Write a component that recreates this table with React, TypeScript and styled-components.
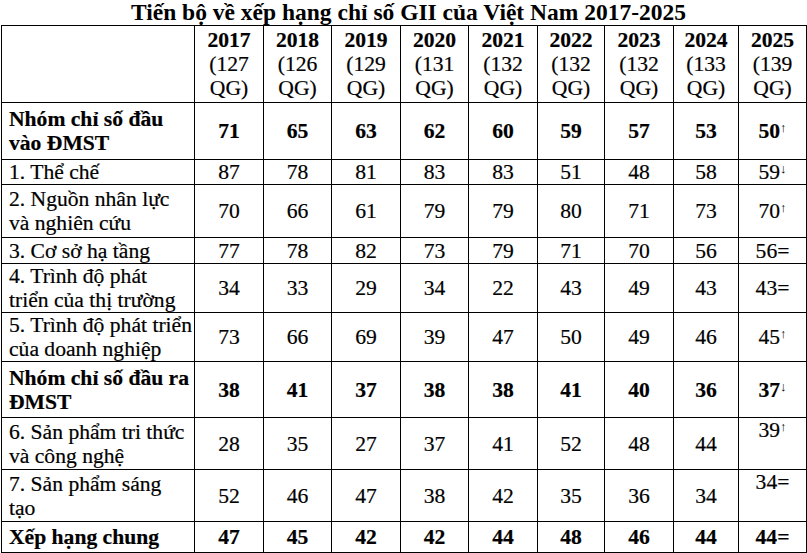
import styled, { createGlobalStyle } from "styled-components";

const GlobalStyle = createGlobalStyle`
  html, body {
    margin: 0;
    padding: 0;
    background: #ffffff;
  }
  body {
    font-family: "Liberation Serif", "Times New Roman", serif;
    color: #000000;
  }
`;

const Page = styled.div`
  width: 805px;
  margin-left: 1px;
`;

const Title = styled.h1`
  margin: 0;
  padding-left: 10px;
  height: 25px;
  font-size: 23.5px;
  line-height: 25px;
  font-weight: 700;
  text-align: center;
`;

const Table = styled.table`
  width: 805px;
  border-collapse: collapse;
  table-layout: fixed;
  font-family: "Liberation Serif", "Times New Roman", serif;
  font-size: 21.6px;
  line-height: 24px;
  color: #000000;
  -webkit-text-stroke: 0.2px #000000;
`;

const Row = styled.tr<{ $h: number }>`
  height: ${(p) => p.$h}px;
`;

const Cell = styled.td<{ $bold?: boolean; $top?: boolean }>`
  border: 1px solid #000000;
  padding: 0;
  text-align: center;
  vertical-align: ${(p) => (p.$top ? "top" : "middle")};
  font-weight: ${(p) => (p.$bold ? 700 : 400)};
  white-space: nowrap;
`;

const LabelCell = styled.td<{ $bold?: boolean }>`
  border: 1px solid #000000;
  padding: 0 0 0 7px;
  text-align: left;
  vertical-align: middle;
  font-weight: ${(p) => (p.$bold ? 700 : 400)};
  white-space: nowrap;
`;

const YearHead = styled.td`
  border: 1px solid #000000;
  padding: 0;
  text-align: center;
  vertical-align: middle;
  white-space: nowrap;
`;

const Year = styled.div`
  font-weight: 700;
`;

const Line = styled.div``;

const Mark = styled.sup`
  font-size: 13px;
  line-height: 0;
  vertical-align: 6px;
  font-weight: 400;
  -webkit-text-stroke: 0;
`;

type Trend = "up" | "down" | "same";

type DataRow = {
  label: string[];
  bold?: boolean;
  values: number[];
  last: number;
  trend: Trend;
  top?: boolean;
  h: number;
};

const years = [
  { y: 2017, n: 127 },
  { y: 2018, n: 126 },
  { y: 2019, n: 129 },
  { y: 2020, n: 131 },
  { y: 2021, n: 132 },
  { y: 2022, n: 132 },
  { y: 2023, n: 132 },
  { y: 2024, n: 133 },
  { y: 2025, n: 139 },
];

const widths = [193, 69, 68, 69, 68, 69, 67, 69, 65, 68];

const rows: DataRow[] = [
  { label: ["Nhóm chỉ số đầu", "vào ĐMST"], bold: true, values: [71, 65, 63, 62, 60, 59, 57, 53], last: 50, trend: "up", h: 57 },
  { label: ["1. Thể chế"], values: [87, 78, 81, 83, 83, 51, 48, 58], last: 59, trend: "down", h: 25 },
  { label: ["2. Nguồn nhân lực", "và nghiên cứu"], values: [70, 66, 61, 79, 79, 80, 71, 73], last: 70, trend: "up", h: 53 },
  { label: ["3. Cơ sở hạ tầng"], values: [77, 78, 82, 73, 79, 71, 70, 56], last: 56, trend: "same", h: 26 },
  { label: ["4. Trình độ phát", "triển của thị trường"], values: [34, 33, 29, 34, 22, 43, 49, 43], last: 43, trend: "same", h: 49 },
  { label: ["5. Trình độ phát triển", "của doanh nghiệp"], values: [73, 66, 69, 39, 47, 50, 49, 46], last: 45, trend: "up", h: 49 },
  { label: ["Nhóm chỉ số đầu ra", "ĐMST"], bold: true, values: [38, 41, 37, 38, 38, 41, 40, 36], last: 37, trend: "down", h: 56 },
  { label: ["6. Sản phẩm tri thức", "và công nghệ"], values: [28, 35, 27, 37, 41, 52, 48, 44], last: 39, trend: "up", top: true, h: 52 },
  { label: ["7. Sản phẩm sáng", "tạo"], values: [52, 46, 47, 38, 42, 35, 36, 34], last: 34, trend: "same", top: true, h: 52 },
  { label: ["Xếp hạng chung"], bold: true, values: [47, 45, 42, 42, 44, 48, 46, 44], last: 44, trend: "same", h: 31 },
];

function TrendValue({ value, trend }: { value: number; trend: Trend }) {
  if (trend === "same") return <>{value}=</>;
  return (
    <>
      {value}
      <Mark>{trend === "up" ? "↑" : "↓"}</Mark>
    </>
  );
}

export default function App() {
  return (
    <Page>
      <GlobalStyle />
      <Title>Tiến bộ về xếp hạng chỉ số GII của Việt Nam 2017-2025</Title>
      <Table>
        <colgroup>
          {widths.map((w, i) => (
            <col key={i} style={{ width: w }} />
          ))}
        </colgroup>
        <tbody>
          <Row $h={77}>
            <Cell />
            {years.map((y) => (
              <YearHead key={y.y}>
                <Year>{y.y}</Year>
                <Line>({y.n}</Line>
                <Line>QG)</Line>
              </YearHead>
            ))}
          </Row>
          {rows.map((r) => (
            <Row key={r.label.join(" ")} $h={r.h}>
              <LabelCell $bold={r.bold}>
                {r.label.map((l) => (
                  <Line key={l}>{l}</Line>
                ))}
              </LabelCell>
              {r.values.map((v, i) => (
                <Cell key={i} $bold={r.bold}>
                  {v}
                </Cell>
              ))}
              <Cell $bold={r.bold} $top={r.top}>
                <TrendValue value={r.last} trend={r.trend} />
              </Cell>
            </Row>
          ))}
        </tbody>
      </Table>
    </Page>
  );
}
